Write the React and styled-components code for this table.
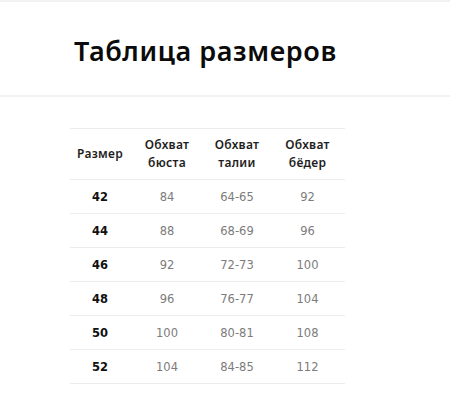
import React from "react";
import styled, { createGlobalStyle } from "styled-components";

const GlobalStyle = createGlobalStyle`
  html, body {
    margin: 0;
    padding: 0;
    background: #fff;
  }
  body {
    font-family: "DejaVu Sans", "Noto Sans", sans-serif;
    color: #111;
  }
`;

const sizes = [
  { size: "42", bust: "84", waist: "64-65", hips: "92" },
  { size: "44", bust: "88", waist: "68-69", hips: "96" },
  { size: "46", bust: "92", waist: "72-73", hips: "100" },
  { size: "48", bust: "96", waist: "76-77", hips: "104" },
  { size: "50", bust: "100", waist: "80-81", hips: "108" },
  { size: "52", bust: "104", waist: "84-85", hips: "112" },
];

function App() {
  return (
    <Page>
      <GlobalStyle />
      <Header>
        <Title>Таблица размеров</Title>
      </Header>
      <Body>
        <Table>
          <HeadRow>
            <HeadCell>Размер</HeadCell>
            <HeadCell>
              Обхват
              <br />
              бюста
            </HeadCell>
            <HeadCell>
              Обхват
              <br />
              талии
            </HeadCell>
            <HeadCell>
              Обхват
              <br />
              бёдер
            </HeadCell>
          </HeadRow>
          {sizes.map((row) => (
            <Row key={row.size}>
              <Cell bold>{row.size}</Cell>
              <Cell>{row.bust}</Cell>
              <Cell>{row.waist}</Cell>
              <Cell>{row.hips}</Cell>
            </Row>
          ))}
        </Table>
      </Body>
    </Page>
  );
}

const Page = styled.div`
  width: 450px;
  min-height: 411px;
  border-top: 2px solid #f2f2f2;
  box-sizing: border-box;
`;

const Header = styled.div`
  height: 93px;
  padding-left: 74px;
  display: flex;
  align-items: center;
  border-bottom: 2px solid #f2f2f2;
  box-sizing: content-box;
`;

const Title = styled.h1`
  margin: 3px 0 0 0;
  font-family: "Noto Sans", "DejaVu Sans", sans-serif;
  font-size: 27px;
  font-weight: 600;
  letter-spacing: 0.6px;
  color: #0b0b0b;
`;

const Body = styled.div`
  padding: 31px 0 0 70px;
`;

const Table = styled.div`
  width: 275px;
  border-top: 1px solid #ececec;
`;

const HeadRow = styled.div`
  display: grid;
  grid-template-columns: 60px 74px 66px 75px;
  height: 50px;
  align-items: center;
  border-bottom: 1px solid #ececec;
`;

const HeadCell = styled.div`
  text-align: center;
  font-family: "Noto Sans", "DejaVu Sans", sans-serif;
  font-size: 12px;
  line-height: 18px;
  font-weight: 600;
  letter-spacing: 0.3px;
  color: #1e1e1e;
`;

const Row = styled.div`
  display: grid;
  grid-template-columns: 60px 74px 66px 75px;
  height: 33px;
  align-items: center;
  border-bottom: 1px solid #ececec;
`;

const Cell = styled.div`
  text-align: center;
  font-size: 11.5px;
  font-weight: ${(p) => (p.bold ? 700 : 400)};
  color: ${(p) => (p.bold ? "#111" : "#7c7c7c")};
`;

export default App;
